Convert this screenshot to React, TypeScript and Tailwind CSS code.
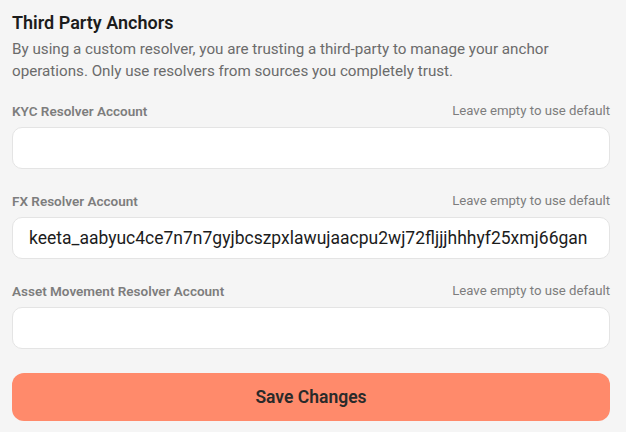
import { useState } from 'react'

const fields = [
  { label: 'KYC Resolver Account', value: '' },
  { label: 'FX Resolver Account', value: 'keeta_aabyuc4ce7n7n7gyjbcszpxlawujaacpu2wj72fljjjhhhyf25xmj66gan' },
  { label: 'Asset Movement Resolver Account', value: '' },
]

export default function App() {
  const [values, setValues] = useState(fields.map(f => f.value))

  return (
    <div className="min-h-screen w-full bg-[#f5f5f5] pl-3 pr-4 pt-[12px] font-['Roboto',sans-serif]">
      <h2 className="text-[18px] font-semibold leading-[22px] text-[#1c1c1c]">Third Party Anchors</h2>
      <p className="mt-[4px] text-[15.2px] leading-[22px] text-[#6b6b6b]">
        By using a custom resolver, you are trusting a third-party to manage your anchor operations. Only use resolvers from sources you completely trust.
      </p>

      {/* resolver inputs */}
      <div className="mt-[19px] flex flex-col gap-[22px]">
        {fields.map((f, i) => (
          <div key={f.label} className="flex flex-col gap-[6px]">
            <div className="flex h-[20px] items-center justify-between">
              <label className="text-[13.5px] font-semibold text-[#7d7d7d]">{f.label}</label>
              <span className="text-[13.2px] text-[#7d7d7d]">Leave empty to use default</span>
            </div>
            <input
              value={values[i]}
              onChange={e => setValues(v => v.map((x, j) => (j === i ? e.target.value : x)))}
              className="h-[42px] w-full rounded-[10px] border border-[#e4e4e4] bg-white px-4 text-[17.5px] text-[#1c1c1c] outline-none"
            />
          </div>
        ))}
      </div>

      <button className="mt-[24px] h-[48px] w-full rounded-[12px] bg-[#ff8a6b] text-[17.5px] font-semibold text-[#2a2a2a]">
        Save Changes
      </button>
    </div>
  )
}
